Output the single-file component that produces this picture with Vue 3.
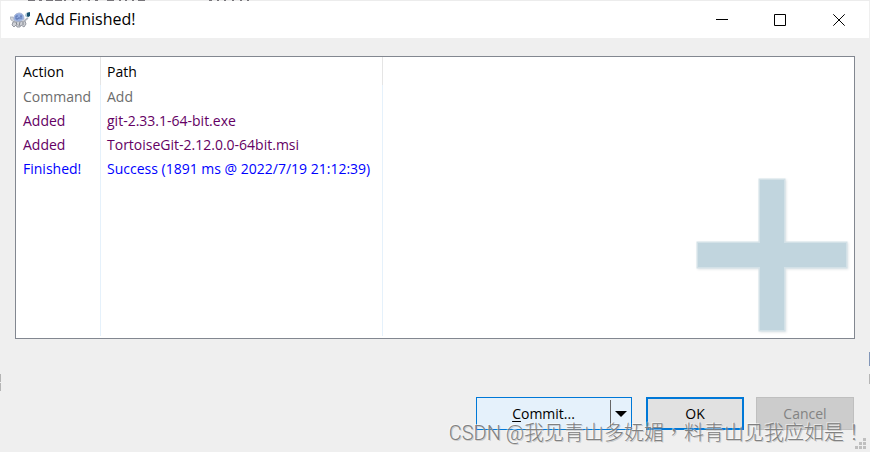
<script setup>
const rows = [
  { action: 'Command', path: 'Add', kind: 'command' },
  { action: 'Added', path: 'git-2.33.1-64-bit.exe', kind: 'added' },
  { action: 'Added', path: 'TortoiseGit-2.12.0.0-64bit.msi', kind: 'added' },
  { action: 'Finished!', path: 'Success (1891 ms @ 2022/7/19 21:12:39)', kind: 'done' },
]
</script>

<template>
  <div class="window">
    <svg class="behind" height="1" aria-hidden="true">
      <path d="M28 .5H35M39 .5H42M46 .5H53M55 .5H62M64 .5H66M72 .5H74M79 .5H81M88 .5H90M95 .5H98M107 .5H114M119 .5H121M125 .5H127M132 .5H134M138 .5H145M209 .5H212M217 .5H219M224 .5H226M232 .5H234M240 .5H242M247 .5H249" />
    </svg>
    <header class="titlebar">
      <svg class="logo" width="20" height="16" viewBox="0 0 20 16" aria-hidden="true">
        <path d="M0 5 L3 5 L5 8 L4 10 L1 8 Z" fill="#d3d5da" stroke="#a2a6af" stroke-width=".7" />
        <path d="M3 10 L15 9 L16 12 L14 15 L11 13 L10 15 L7 15 L6 13 L4 15 L2 13 Z" fill="#cfd1d6" stroke="#8d919b" stroke-width=".9" />
        <path d="M6 10 L7 13 M10 10 L9 14 M13 10 L13 13" stroke="#767a84" stroke-width=".9" />
        <path d="M4 8 Q3 2 9 1 Q14 1 14 7 Q9 11 4 8 Z" fill="#93acdf" stroke="#a9b7d6" />
        <path d="M8 4 L6 4 L6 7 L8 7 L8 6 M9 5 V7 M10 4 H12 M11 4 V7" fill="none" stroke="#5871ac" stroke-width=".9" />
        <path d="M14 9 L18 6" stroke="#b1b5bf" stroke-width="1.6" />
        <path d="M15 3 Q16 0 19 0 L19 5 Q17 6 15 4 Z" fill="#a9c3d3" />
        <path d="M17 1 L20 0 L20 4 L18 5 L17 4 Z" fill="#17506f" />
      </svg>
      <h1>Add Finished!</h1>
      <div class="controls">
        <button type="button" aria-label="Minimize">
          <svg width="12" height="12" viewBox="0 0 12 12"><path d="M0 5.5H12" /></svg>
        </button>
        <button type="button" aria-label="Maximize">
          <svg width="12" height="12" viewBox="0 0 12 12"><path d="M.5 .5H11.5V11.5H.5Z" /></svg>
        </button>
        <button type="button" aria-label="Close">
          <svg width="12" height="12" viewBox="0 0 12 12"><path d="M.3 .3L11.7 11.7M11.7 .3L.3 11.7" /></svg>
        </button>
      </div>
    </header>

    <main class="log">
      <table>
        <colgroup><col class="c-action" /><col class="c-path" /><col /></colgroup>
        <thead>
          <tr><th scope="col">Action</th><th scope="col">Path</th><td></td></tr>
        </thead>
        <tbody>
          <tr v-for="(row, i) in rows" :key="i" :class="row.kind">
            <td>{{ row.action }}</td><td>{{ row.path }}</td><td></td>
          </tr>
          <tr class="rest"><td></td><td></td><td></td></tr>
        </tbody>
      </table>
      <svg class="plus" width="158" height="160" viewBox="0 0 158 160" aria-hidden="true">
        <path class="edge" d="M62.5 .5H89.5V63.5H151.5V90.5H89.5V153.5H62.5V90.5H.5V63.5H62.5Z" />
        <path d="M64 2H88V65H150V89H88V152H64V89H2V65H64Z" />
      </svg>
    </main>

    <footer class="actions">
      <div class="split">
        <button type="button" class="commit"><span><u>C</u>ommit...</span></button>
        <button type="button" class="drop" aria-label="More commit actions">
          <svg width="12" height="6" viewBox="0 0 12 6"><path d="M0 0H12L6 6Z" /></svg>
        </button>
      </div>
      <button type="button" class="btn ok">OK</button>
      <button type="button" class="btn" disabled>Cancel</button>
    </footer>

    <div class="watermark">CSDN @<span lang="zh-CN">我见青山多妩媚<span lang="zh-TW" class="centered">，</span>料青山见我应如是<span lang="zh-TW" class="centered">！</span></span></div>
    <svg class="grip" width="12" height="12" viewBox="0 0 12 12" aria-hidden="true">
      <path d="M8 0h3v3h-3zM4 4h3v3h-3zM8 4h3v3h-3zM0 8h3v3h-3zM4 8h3v3h-3zM8 8h3v3h-3z" />
    </svg>
    <svg class="peek left" width="1" height="20" viewBox="0 0 1 20" aria-hidden="true">
      <path d="M0 0H1V8H0ZM0 9H1V17H0Z" />
    </svg>
    <svg class="peek right" width="1" height="34" viewBox="0 0 1 34" aria-hidden="true">
      <path class="blue" d="M0 0H1V14H0Z" />
      <path d="M0 22H1V32H0Z" />
    </svg>
  </div>
</template>

<style>
body {
  background: #efefef;
}
</style>

<style scoped>
* {
  box-sizing: border-box;
}
.window {
  position: relative;
  display: flex;
  flex-direction: column;
  min-height: 100vh;
  overflow: hidden;
  font: 14px/24px "Open Sans", "Noto Sans CJK SC", sans-serif;
  color: #000;
}
button {
  font: inherit;
  color: inherit;
  margin: 0;
  padding: 0;
  border: 0;
  background: none;
}
.behind {
  display: block;
  width: 100%;
  background: #ececec;
  stroke: #77757a;
}
.titlebar {
  display: flex;
  align-items: center;
  height: 37px;
  margin: 0 1px;
  padding-left: 9px;
  background: #fff;
}
.logo {
  margin-right: 5px;
}
h1 {
  flex: 1;
  margin: 0;
  font-size: 16px;
  line-height: 22px;
  padding-bottom: 2px;
  font-weight: 400;
}
.controls {
  display: flex;
}
.controls button {
  display: grid;
  place-items: center;
  width: 58px;
  height: 36px;
}
.controls button:last-child {
  width: 60px;
}
.controls path {
  fill: none;
  stroke: #000;
}
.log {
  position: relative;
  display: flex;
  flex: 1;
  margin: 18px 15px 58px;
  border: 1px solid #828790;
  background: #fff;
}
table {
  width: 100%;
  padding-bottom: 2px;
  table-layout: fixed;
  border-spacing: 0;
}
.c-action {
  width: 85px;
}
.c-path {
  width: 282px;
}
th,
td {
  height: 24px;
  padding: 0 0 0 6px;
  text-align: left;
  font-weight: 400;
  white-space: nowrap;
  border-right: 1px solid #e5f1fb;
}
th:first-child,
td:first-child {
  padding-left: 7px;
}
th {
  height: 28px;
  padding-top: 2px;
  border-right-color: #e5e5e5;
}
td:last-child {
  border-right: 0;
}
.rest td {
  height: auto;
}
.command {
  color: #6d6d6d;
}
.added {
  color: #640064;
}
.done {
  color: #0000ff;
}
.plus {
  position: absolute;
  right: 0;
  bottom: 0;
  fill: #c1d5de;
  filter: drop-shadow(1px 1px 1px #e2e6e8);
}
.edge {
  fill: #d3e1e7;
}
.actions {
  display: flex;
  justify-content: flex-end;
  gap: 12px;
  padding: 0 16px 22px;
}
.split {
  display: flex;
  width: 156px;
  height: 33px;
  margin-right: 2px;
  border: 1px solid #0078d7;
  background: #e5f1fb;
}
.commit {
  flex: 1;
}
.commit u {
  text-underline-offset: 2px;
}
.drop {
  display: grid;
  place-items: center;
  width: 21px;
  margin: 2px 0;
  border-left: 1px solid #666;
}
.btn {
  width: 98px;
  height: 33px;
  border: 1px solid #bfbfbf;
  background: #ccc;
  color: #838383;
}
.ok {
  border: 2px solid #0078d7;
  background: #e1e1e1;
  color: #000;
}
.watermark {
  position: absolute;
  right: 6px;
  bottom: 4px;
  font: 300 20px/30px Roboto, "Noto Sans CJK SC", sans-serif;
  color: #808080;
  text-shadow: -1px -1px 0 rgba(255, 255, 255, 0.5), 1px 1px 0 rgba(120, 120, 120, 0.3);
  white-space: nowrap;
  pointer-events: none;
}
.centered {
  font-family: "Noto Sans CJK TC", sans-serif;
}
.grip {
  position: absolute;
  right: 3px;
  bottom: 2px;
  fill: #bfbfbf;
}
.peek {
  position: absolute;
  fill: #b5b5b5;
}
.left {
  left: 0;
  top: 374px;
}
.right {
  right: 0;
  top: 352px;
}
.blue {
  fill: #8296b8;
}
</style>
